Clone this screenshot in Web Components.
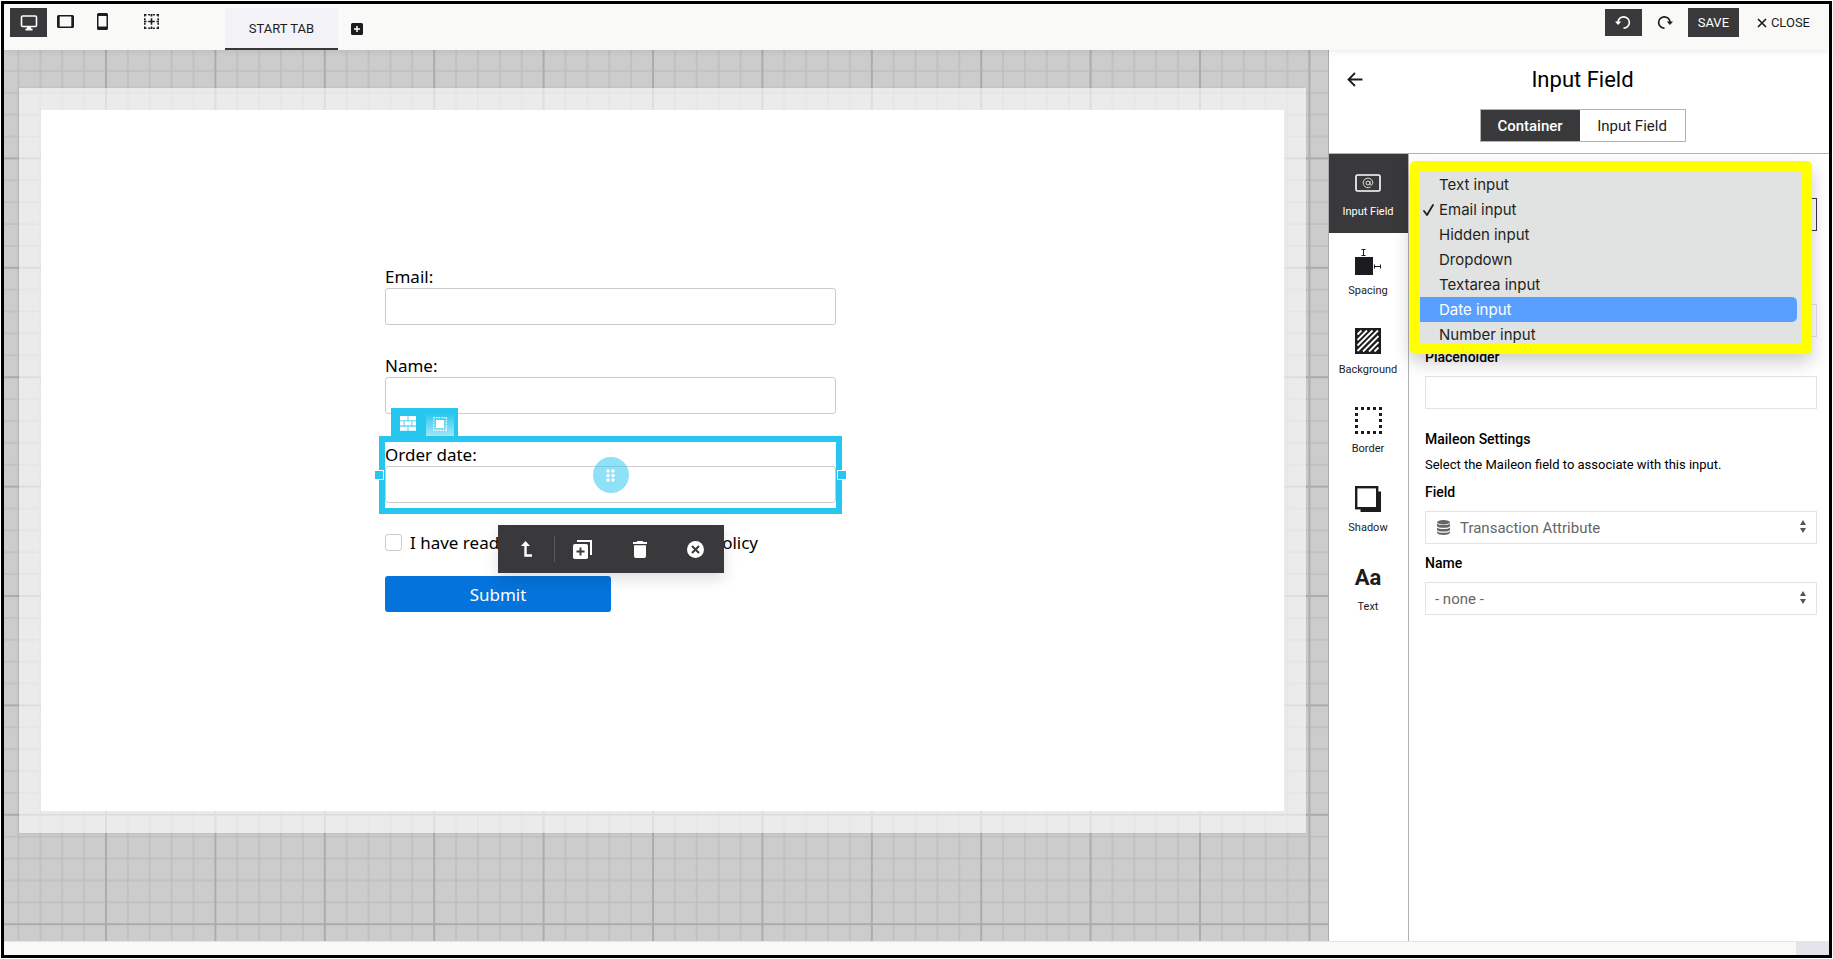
<!DOCTYPE html>
<html lang="en">
<head>
<meta charset="utf-8">
<title>Form builder</title>
<style>
  html, body { height: 100%; margin: 0; }
  body { background: #fff; font-family: Roboto, "Liberation Sans", sans-serif; color: #1c1c1e; }
</style>
</head>
<body>
<builder-app></builder-app>
<script>
const define = (name, html, setup) => {
  const template = document.createElement('template');
  template.innerHTML = `<style>
    *, *::before, *::after { box-sizing: border-box; }
    :host { display: block; box-sizing: border-box; }
    button, input, select { font: inherit; color: inherit; margin: 0; padding: 0; border: 0; border-radius: 0; background: none; }
    svg { display: block; }
  </style>` + html;
  customElements.define(name, class extends HTMLElement {
    constructor() {
      super();
      this.attachShadow({ mode: 'open' }).append(template.content.cloneNode(true));
    }
    connectedCallback() { if (setup) setup(this, this.shadowRoot); }
  });
};

/* Top bar */
define('top-bar', `
<style>
  :host { display: flex; justify-content: space-between; height: 46px; background: #f9f9f7; padding: 4px 11px 0 6px; font-size: 13px; position: relative; z-index: 3; box-shadow: 0 2px 6px rgba(0,0,0,.07); }
  .group { display: flex; align-items: flex-start; }
  button { display: flex; align-items: center; justify-content: center; height: 29px; }
  .dev { width: 37px; }
  .slim { height: 27px; }
  .dark { background: #39393b; color: #fff; }
  .grid { margin-left: 12px; }
  .tab { width: 113px; height: 42px; margin-left: 55px; background: #f3f2f7; border-bottom: 2px solid #353c38; }
  .add { height: 42px; width: 38px; }
  .undo { width: 37px; height: 27px; margin-top: 1px; }
  .redo { width: 46px; }
  .save { width: 51px; }
  .close { gap: 4px; margin-left: 10px; padding: 0 8px; }
</style>
<div class="group">
  <button class="dev dark" aria-label="Desktop"><svg width="18" height="16" viewBox="0 0 18 16"><rect x="1.5" y="1" width="15" height="10.5" rx="1.2" fill="none" stroke="#fff" stroke-width="1.6"/><path d="M7 11.5h4v2h1.5v2h-7v-2H7z" fill="#fff"/></svg></button>
  <button class="dev slim" aria-label="Tablet"><svg width="17" height="13" viewBox="0 0 17 13"><path fill-rule="evenodd" d="M1.6 0h13.8A1.6 1.6 0 0 1 17 1.600v9.800A1.600 1.600 0 0 1 15.400 13H1.600A1.600 1.600 0 0 1 0 11.400V1.600A1.600 1.600 0 0 1 1.600 0zM2.700 1.600v9.800h11.600V1.600z" fill="#1c1c1e"/></svg></button>
  <button class="dev slim" aria-label="Phone"><svg width="11" height="17" viewBox="0 0 11 17"><path fill-rule="evenodd" d="M1.500 0h8A1.500 1.500 0 0 1 11 1.500v14A1.500 1.500 0 0 1 9.500 17h-8A1.500 1.500 0 0 1 0 15.500v-14A1.500 1.500 0 0 1 1.500 0zM1.500 3v10.500h8V3z" fill="#1c1c1e"/></svg></button>
  <button class="dev slim grid" aria-label="Grid"><svg width="15" height="15" viewBox="0 0 15 15" fill="none" stroke="#1c1c1e" stroke-width="1.600"><path d="M0 .8h2.500M4.200.8h2M8.800.8h2M12.500.8H15M0 14.200h2.500M4.200 14.200h2M8.800 14.200h2M12.500 14.200H15M.8 0v2.500M.8 4.200v2M.8 8.800v2M.8 12.500V15M14.200 0v2.500M14.200 4.200v2M14.200 8.800v2M14.200 12.500V15M7.500 0v2.500M7.500 12.500V15M0 7.500h2.500M12.500 7.500H15M4.200 7.500h6.600M7.500 4.200v6.600"/></svg></button>
  <button class="tab">START TAB</button>
  <button class="add" aria-label="Add tab"><svg width="12" height="12" viewBox="0 0 12 12"><rect width="12" height="12" rx="1.500" fill="#1c1c1e"/><path d="M6 3v6M3 6h6" stroke="#fff" stroke-width="1.500"/></svg></button>
</div>
<div class="group">
  <button class="undo dark" aria-label="Undo"><svg width="16" height="15" viewBox="0 0 16 15"><path d="M3 8.500V7A5.700 5.700 0 1 1 8.500 13.200" fill="none" stroke="#fff" stroke-width="1.700"/><path d="M0 6.500h6.200L3.100 10z" fill="#fff"/></svg></button>
  <button class="redo" aria-label="Redo"><svg width="16" height="15" viewBox="0 0 16 15"><path d="M13 8.500V7A5.700 5.700 0 1 0 7.500 13.200" fill="none" stroke="#1c1c1e" stroke-width="1.700"/><path d="M16 6.500H9.800l3.100 3.500z" fill="#1c1c1e"/></svg></button>
  <button class="save dark">SAVE</button>
  <button class="close"><svg width="10" height="10" viewBox="0 0 10 10"><path d="M1 1l8 8M9 1L1 9" stroke="#1c1c1e" stroke-width="1.700"/></svg>CLOSE</button>
</div>`);

/* A labelled text box of the edited form */
define('form-field', `
<style>
  :host { height: 58px; }
  label { display: block; line-height: 19px; height: 21px; }
  input { display: block; width: 100%; height: 37px; padding: 0 8px; border: 1px solid #ccc; border-radius: 3px; background: #fff; }
</style>
<label for="box"></label><input id="box" type="text">`,
(host, root) => { root.querySelector('label').textContent = host.getAttribute('label'); });

/* Frame and handles round the chosen field */
define('selected-block', `
<style>
  :host { position: relative; }
  .frame { position: absolute; inset: -9px -6px -11px; border: 6px solid #26c6ee; pointer-events: none; }
  .tabs { position: absolute; left: 6px; top: -37px; height: 28px; width: 67px; background: #26c6ee; display: grid; grid-template-columns: 33px 28px; column-gap: 2px; padding-top: 5px; }
  .tabs button { display: flex; justify-content: center; padding-top: 3px; }
  .tabs button + button { background: linear-gradient(#26c6ee, #a5e5f7); padding-top: 4px; }
  .handle { position: absolute; top: 25px; width: 10px; height: 10px; background: #26c6ee; border: 1px solid #fff; }
  .left { left: -11px; } .right { right: -11px; }
  .grip { position: absolute; left: calc(50% - 18px); top: 12px; width: 36px; height: 36px; border-radius: 50%; background: rgba(38,198,238,.52); display: grid; place-items: center; }
</style>
<slot></slot>
<div class="frame"></div>
<div class="tabs">
  <button aria-label="Layout"><svg width="16" height="15" viewBox="0 0 16 15" fill="#fff"><path d="M0 0h7.600v4.400H0zM8.400 0H16v4.400H8.400zM0 5.200h3.600v4.400H0zM4.400 5.200h7.200v4.400H4.400zM12.400 5.200H16v4.400h-3.600zM0 10.400h7.600v4.400H0zM8.400 10.400H16v4.400H8.400z"/></svg></button>
  <button aria-label="Element"><svg width="14" height="14" viewBox="0 0 14 14"><rect x=".7" y=".7" width="12.600" height="12.600" fill="none" stroke="#fff" stroke-width="1.200" stroke-dasharray="1.400 1.100"/><rect x="3" y="3" width="8" height="8" fill="#fff"/></svg></button>
</div>
<span class="handle left"></span><span class="handle right"></span>
<button class="grip" aria-label="Move"><svg width="9" height="13" viewBox="0 0 9 13" fill="#fff"><circle cx="2" cy="2" r="1.700"/><circle cx="7" cy="2" r="1.700"/><circle cx="2" cy="6.500" r="1.700"/><circle cx="7" cy="6.500" r="1.700"/><circle cx="2" cy="11" r="1.700"/><circle cx="7" cy="11" r="1.700"/></svg></button>`);

define('block-toolbar', `
<style>
  :host { display: flex; align-items: center; width: 226px; height: 48px; background: #39393b; box-shadow: 0 6px 14px rgba(0,0,0,.13); }
  button { flex: 1; height: 48px; display: grid; place-items: center; }
  i { width: 1px; height: 26px; background: #5a5a5c; }
</style>
<button aria-label="Select parent"><svg width="11" height="16" viewBox="0 0 11 16"><path d="M4.500 3v11.500H11" fill="none" stroke="#fff" stroke-width="2.400"/><path d="M4.500 0L9 5H0z" fill="#fff"/></svg></button>
<i></i>
<button aria-label="Duplicate"><svg width="20" height="19" viewBox="0 0 20 19"><rect y="4" width="15" height="15" rx="1.800" fill="#fff"/><path d="M4 1h14v14" fill="none" stroke="#fff" stroke-width="2"/><path d="M7.500 7.500v8M3.500 11.500h8" stroke="#39393b" stroke-width="1.900"/></svg></button>
<button aria-label="Delete"><svg width="14" height="17" viewBox="0 0 14 17" fill="#fff"><path d="M4.500 0h5l1 1H14v2H0V1h3.500zM1 4.200h12v11A1.800 1.800 0 0 1 11.200 17H2.800A1.800 1.800 0 0 1 1 15.200z"/></svg></button>
<button aria-label="Close"><svg width="17" height="17" viewBox="0 0 17 17"><circle cx="8.500" cy="8.500" r="8.500" fill="#fff"/><path d="M5 5l7 7M12 5l-7 7" stroke="#39393b" stroke-width="2"/></svg></button>`);

/* Gridded work area with the page on it */
define('edit-canvas', `
<style>
  :host { position: relative; background: #ccc; padding: 38px 22px 108px 15px; display: grid; overflow: hidden; }
  .lines { position: absolute; inset: 0; width: 100%; height: 100%; }
  .sheet { position: relative; background: rgba(255,255,255,.6); padding: 22px; display: grid; box-shadow: 0 0 2px rgba(0,0,0,.12); }
  .page { background: #fff; padding: 157px 0 0 344px; font: 17px "Noto Sans", "Open Sans", sans-serif; color: #000; }
  form { width: 451px; display: grid; gap: 31px; position: relative; }
  .agree { display: flex; align-items: center; gap: 8px; height: 24px; margin-top: -4px; white-space: nowrap; }
  .agree input { appearance: none; width: 17px; height: 17px; border: 1px solid #ccc; border-radius: 3px; background: #fff; }
  .submit { width: 226px; height: 36px; margin-top: -9px; border-radius: 3px; background: #0573dc; color: #fff; }
  block-toolbar { position: absolute; left: 113px; top: 258px; }
</style>
<svg class="lines" aria-hidden="true">
  <defs><pattern id="mesh" width="100" height="100" patternUnits="userSpaceOnUse" patternTransform="translate(102 -1) scale(1.094)">
    <path d="M20 0v100M40 0v100M60 0v100M80 0v100M0 20h100M0 40h100M0 60h100M0 80h100" stroke="#bebebe" stroke-width="1.400"/>
    <path d="M0 0v100M100 0v100M0 0h100M0 100h100" stroke="#acacac" stroke-width="1.800"/>
  </pattern></defs>
  <rect width="100%" height="100%" fill="url(#mesh)"/>
</svg>
<div class="sheet"><div class="page">
  <form>
    <form-field label="Email:"></form-field>
    <form-field label="Name:"></form-field>
    <selected-block><form-field label="Order date:"></form-field></selected-block>
    <div class="agree"><input type="checkbox" id="ok"><label for="ok">I have read and I agree to the privacy policy</label></div>
    <button class="submit" type="button">Submit</button>
    <block-toolbar></block-toolbar>
  </form>
</div></div>`);

/* Entry in the settings rail: icon in the slot, caption in the attribute */
define('rail-item', `
<style>
  :host { height: 79px; }
  button { width: 100%; height: 79px; display: flex; flex-direction: column; align-items: center; gap: 2px; font-size: 11px; padding: 9px 1px 0 0; line-height: 14px; }
  .icon { display: grid; place-items: center; height: 40px; }
  :host([active]) button { background: #39393b; color: #fff; }
</style>
<button><div class="icon"><slot></slot></div><span></span></button>`,
(host, root) => { root.querySelector('span').textContent = host.getAttribute('label'); });

define('type-menu', `
<style>
  :host { border: 10px solid #ff0; border-radius: 5px; background: #ff0; box-shadow: 0 8px 18px rgba(0,0,0,.2); }
  div { height: 173px; overflow: hidden; background: #e1e3e2; padding: 1px 5px 0 0; font: 15px Inter, Roboto, sans-serif; color: #1f1f21; }
  button { display: flex; align-items: center; width: 100%; height: 25px; }
  button::before { content: ""; width: 19px; }
  svg { width: 11px; margin: 0 5px 0 3px; }
  [aria-selected=true]::before { display: none; }
  .over { background: #589fff; color: #fff; border-radius: 0 5px 5px 0; }
</style>
<div role="listbox" aria-label="Input type">
  <button role="option">Text input</button>
  <button role="option" aria-selected="true"><svg width="11" height="12" viewBox="0 0 11 12"><path d="M1 7l3 4L10 1" fill="none" stroke="#1f1f21" stroke-width="1.800" stroke-linecap="round" stroke-linejoin="round"/></svg>Email input</button>
  <button role="option">Hidden input</button>
  <button role="option">Dropdown</button>
  <button role="option">Textarea input</button>
  <button role="option" class="over">Date input</button>
  <button role="option">Number input</button>
</div>`);

define('settings-panel', `
<style>
  :host { display: grid; grid-template-rows: 104px 1fr; background: #fff; border-left: 1px solid #aaa; }
  header { display: grid; grid-template-columns: 40px 1fr 40px; align-items: start; border-bottom: 1px solid #b2b2b4; padding: 15px 3px 0 10px; }
  .back { width: 32px; height: 28px; display: grid; place-items: center; }
  .mid { display: grid; justify-items: center; gap: 15px; padding-top: 1px; }
  h1 { margin: 0; font-size: 22px; line-height: 28px; font-weight: 400; color: #000; }
  .seg { display: flex; border: 1px solid #b2b2b4; font-size: 15px; }
  .seg button { height: 31px; width: 105px; }
  .seg button:first-child { width: 99px; background: #39393b; color: #fff; font-weight: 500; }
  .body { display: grid; grid-template-columns: 80px 1fr; }
  nav { border-right: 1px solid #b2b2b4; }
  .fields { position: relative; padding: 44px 12px 0 16px; color: #000; font-size: 14px; }
  label, h2 { display: block; margin: 0; font-size: 14px; font-weight: 500; line-height: 20px; }
  p { margin: 6px 0 7px; font-size: 13px; line-height: 20px; }
  input, select { appearance: none; display: block; width: 100%; height: 33px; border: 1px solid #e3e3e5; background: #fff; padding: 0 10px; }
  .type { border-color: #39393b; margin-bottom: 73px; }
  .extra { margin-bottom: 10px; }
  .place { margin: 9px 0 20px; }
  .pick { position: relative; margin: 9px 0; font-size: 15px; color: #666; }
  .pick select { padding: 0 9px; }
  .pick svg { position: absolute; top: 9px; }
  .pick .arrows { right: 11px; }
  .pick .db { left: 12px; }
  .pick .with { padding-left: 34px; }
  .aa { font-size: 22px; font-weight: 700; line-height: 26px; }
  type-menu { position: absolute; left: 1px; right: 17px; top: 7px; }
</style>
<header>
  <button class="back" aria-label="Back"><svg width="16" height="15" viewBox="0 0 16 15"><path d="M8 1L1.500 7.500 8 14M1.500 7.500H15.500" fill="none" stroke="#1c1c1e" stroke-width="1.800"/></svg></button>
  <div class="mid"><h1>Input Field</h1>
  <div class="seg"><button>Container</button><button>Input Field</button></div></div>
</header>
<div class="body">
  <nav>
    <rail-item label="Input Field" active><svg width="26" height="18" viewBox="0 0 26 18"><rect x="1" y="1" width="24" height="16" rx="1.500" fill="none" stroke="#fff" stroke-width="1.600"/><g fill="none" stroke="#ddd" stroke-width="1"><circle cx="13" cy="9" r="2"/><path d="M15 7v3c0 1.700 2.800 1.500 2.800-1.200A4.800 4.800 0 1 0 15.500 13"/></g></svg></rail-item>
    <rail-item label="Spacing"><svg width="28" height="28" viewBox="0 0 28 28"><rect x="1" y="9" width="18" height="18" fill="#1c1c1e"/><path d="M7.500 1.500h4M7.500 7.500h4M9.500 1.500v6M20.500 16.500v4M26.500 16.500v4M20.500 18.500h6" stroke="#1c1c1e" stroke-width="1" fill="none"/></svg></rail-item>
    <rail-item label="Background"><svg width="26" height="26" viewBox="0 0 26 26"><rect width="26" height="26" fill="#1c1c1e"/><path d="M2.500 6.500l4-4M2.500 12L12 2.500M2.500 17.500l15-15M2.500 23L23 2.500M8 23.500L23.500 8M14 23.500l9.500-9.500M19.500 23.500l4-4" stroke="#fff" stroke-width="1.800"/></svg></rail-item>
    <rail-item label="Border"><svg width="27" height="27" viewBox="0 0 27 27"><path d="M0 1.500h27M0 25.500h27" stroke="#1c1c1e" stroke-width="3" stroke-dasharray="3 3"/><path d="M1.500 0v27M25.500 0v27" stroke="#1c1c1e" stroke-width="3" stroke-dasharray="3 3"/></svg></rail-item>
    <rail-item label="Shadow"><svg width="26" height="26" viewBox="0 0 26 26"><path d="M5.500 5.500H26V26H5.500z" fill="#1c1c1e"/><rect x="1.200" y="1.200" width="21" height="21" fill="#fff" stroke="#1c1c1e" stroke-width="2.400"/></svg></rail-item>
    <rail-item label="Text"><div class="aa">Aa</div></rail-item>
  </nav>
  <div class="fields">
    <select class="type" aria-label="Input type"></select>
    <input class="extra" type="text" aria-label="Label">
    <label for="ph">Placeholder</label>
    <input class="place" id="ph" type="text">
    <h2>Maileon Settings</h2>
    <p>Select the Maileon field to associate with this input.</p>
    <label for="field">Field</label>
    <div class="pick">
      <select class="with" id="field"><option>Transaction Attribute</option></select>
      <svg class="db" width="13" height="15" viewBox="0 0 13 15" fill="#666"><ellipse cx="6.500" cy="2.200" rx="6.500" ry="2.200"/><path d="M0 3.600c1.500 2 11.500 2 13 0v2.600c-1.500 2-11.500 2-13 0zM0 7.500c1.500 2 11.500 2 13 0v2.600c-1.500 2-11.500 2-13 0zM0 11.300c1.500 2 11.500 2 13 0v1.500c-1.500 2.900-11.500 2.900-13 0z"/></svg>
      <svg class="arrows" width="6" height="13" viewBox="0 0 6 13" fill="#555"><path d="M3 0l3 5H0zM3 13l3-5H0z"/></svg>
    </div>
    <label for="name">Name</label>
    <div class="pick">
      <select id="name"><option>- none -</option></select>
      <svg class="arrows" width="6" height="13" viewBox="0 0 6 13" fill="#555"><path d="M3 0l3 5H0zM3 13l3-5H0z"/></svg>
    </div>
    <type-menu></type-menu>
  </div>
</div>`);

define('builder-app', `
<style>
  :host { height: 100%; padding: 1px; background: #fff; }
  main { height: 100%; border: 3px solid #000; display: grid; grid-template-rows: 46px 1fr 14px; }
  .work { display: grid; grid-template-columns: 1fr 501px; }
  footer { display: flex; justify-content: flex-end; background: #f9f9f7; border-top: 1px solid #e5e4ea; }
  footer span { width: 33px; background: #e5e4ea; }
</style>
<main>
  <top-bar></top-bar>
  <div class="work"><edit-canvas></edit-canvas><settings-panel></settings-panel></div>
  <footer><span></span></footer>
</main>`);
</script>
</body>
</html>
